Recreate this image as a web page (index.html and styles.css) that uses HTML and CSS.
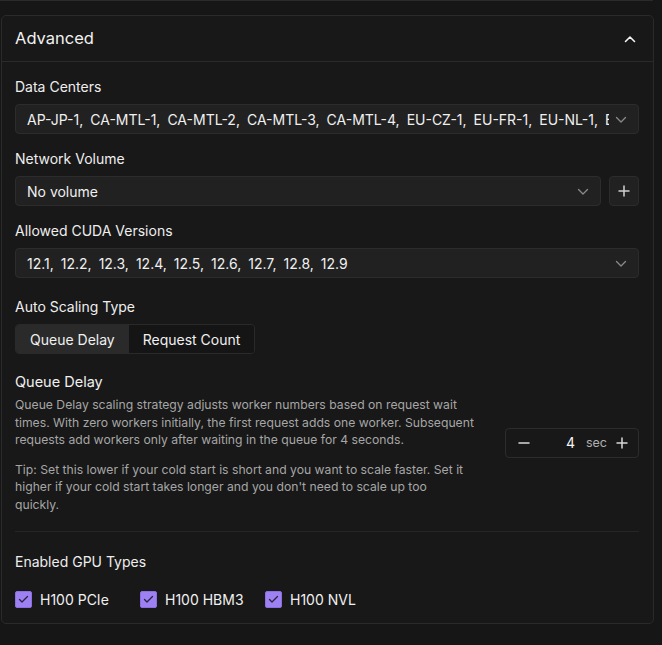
FILE: index.html
```html
<!DOCTYPE html>
<html>
<head>
<meta charset="utf-8">
<link rel="stylesheet" href="styles.css">
</head>
<body>
<div class="prev"></div>
<section class="card">
  <header class="card-head">
    <span class="card-title">Advanced</span>
    <svg class="chev-up" width="12" height="8" viewBox="0 0 12 8"><path d="M1.5 6.5 L6 2 L10.5 6.5" fill="none" stroke="#f2f2f2" stroke-width="1.6" stroke-linecap="round" stroke-linejoin="round"/></svg>
  </header>
  <div class="card-body">
    <div class="field">
      <div class="label">Data Centers</div>
      <div class="select">
        <div class="values"><span>AP-JP-1,</span><span>CA-MTL-1,</span><span>CA-MTL-2,</span><span>CA-MTL-3,</span><span>CA-MTL-4,</span><span>EU-CZ-1,</span><span>EU-FR-1,</span><span>EU-NL-1,</span><span>EU-RO-1,</span><span>EU-SE-1,</span></div>
        <svg class="chev" width="12" height="8" viewBox="0 0 12 8"><path d="M1.5 1.5 L6 6 L10.5 1.5" fill="none" stroke="#8a8a8a" stroke-width="1.3" stroke-linecap="round" stroke-linejoin="round"/></svg>
      </div>
    </div>
    <div class="field">
      <div class="label">Network Volume</div>
      <div class="row">
        <div class="select grow">
          <div class="values"><span>No volume</span></div>
          <svg class="chev" width="12" height="8" viewBox="0 0 12 8"><path d="M1.5 1.5 L6 6 L10.5 1.5" fill="none" stroke="#8a8a8a" stroke-width="1.3" stroke-linecap="round" stroke-linejoin="round"/></svg>
        </div>
        <div class="icon-btn"><svg width="12" height="12" viewBox="0 0 12 12"><path d="M6 1 V11 M1 6 H11" stroke="#cfcfcf" stroke-width="1.5" stroke-linecap="round"/></svg></div>
      </div>
    </div>
    <div class="field">
      <div class="label">Allowed CUDA Versions</div>
      <div class="select">
        <div class="values"><span>12.1,</span><span>12.2,</span><span>12.3,</span><span>12.4,</span><span>12.5,</span><span>12.6,</span><span>12.7,</span><span>12.8,</span><span>12.9</span></div>
        <svg class="chev" width="12" height="8" viewBox="0 0 12 8"><path d="M1.5 1.5 L6 6 L10.5 1.5" fill="none" stroke="#8a8a8a" stroke-width="1.3" stroke-linecap="round" stroke-linejoin="round"/></svg>
      </div>
    </div>
    <div class="field field-scaling">
      <div class="label">Auto Scaling Type</div>
      <div class="segmented">
        <div class="seg active">Queue Delay</div>
        <div class="seg">Request Count</div>
      </div>
    </div>
    <div class="delay">
      <div class="delay-text">
        <div class="delay-title">Queue Delay</div>
        <p class="desc">Queue Delay scaling strategy adjusts worker numbers based on request wait times. With zero workers initially, the first request adds one worker. Subsequent requests add workers only after waiting in the queue for 4 seconds.</p>
        <p class="desc">Tip: Set this lower if your cold start is short and you want to scale faster. Set it higher if your cold start takes longer and you don't need to scale up too<br>quickly.</p>
      </div>
      <div class="stepper">
        <svg width="12" height="12" viewBox="0 0 12 12"><path d="M1 6 H11" stroke="#d8d8d8" stroke-width="1.5" stroke-linecap="round"/></svg>
        <span class="num">4</span>
        <span class="unit">sec</span>
        <svg width="12" height="12" viewBox="0 0 12 12"><path d="M6 1 V11 M1 6 H11" stroke="#d8d8d8" stroke-width="1.5" stroke-linecap="round"/></svg>
      </div>
    </div>
    <div class="divider"></div>
    <div class="label gpu-label">Enabled GPU Types</div>
    <div class="checks">
      <label class="check"><span class="box"><svg width="11" height="9" viewBox="0 0 11 9"><path d="M1.5 4.5 L4 7 L9.5 1.5" fill="none" stroke="#2a2340" stroke-width="1.3" stroke-linecap="round" stroke-linejoin="round"/></svg></span>H100 PCIe</label>
      <label class="check"><span class="box"><svg width="11" height="9" viewBox="0 0 11 9"><path d="M1.5 4.5 L4 7 L9.5 1.5" fill="none" stroke="#2a2340" stroke-width="1.3" stroke-linecap="round" stroke-linejoin="round"/></svg></span>H100 HBM3</label>
      <label class="check"><span class="box"><svg width="11" height="9" viewBox="0 0 11 9"><path d="M1.5 4.5 L4 7 L9.5 1.5" fill="none" stroke="#2a2340" stroke-width="1.3" stroke-linecap="round" stroke-linejoin="round"/></svg></span>H100 NVL</label>
    </div>
  </div>
</section>
</body>
</html>
```

FILE: styles.css
```css
* { box-sizing: border-box; }
html, body { margin: 0; padding: 0; }
body {
  background: #161616;
  font-family: Inter, "Noto Sans", sans-serif;
  color: #ececec;
  width: 662px;
  height: 645px;
  overflow: hidden;
}
.prev {
  width: 653px;
  height: 1px;
  background: #2a2a2a;
}
.card {
  margin: 14px 0 0 1px;
  width: 653px;
  background: #181818;
  border: 1px solid #2a2a2a;
  border-radius: 5px;
}
.card-head {
  height: 46px;
  display: flex;
  align-items: center;
  justify-content: space-between;
  padding: 0 17px 0 13px;
  border-bottom: 1px solid #2a2a2a;
}
.card-title {
  font-size: 16.5px;
  color: #f2f2f2;
  margin-top: -2px;
}
.chev-up { margin-top: 0; }
.card-body {
  padding: 15px 14px 15px 13px;
}
.field { margin-bottom: 15px; }
.field-scaling { margin-top: 19px; margin-bottom: 18px; }
.label {
  font-size: 14px;
  line-height: 20px;
  color: #eeeeee;
  margin-bottom: 7px;
}
.select {
  height: 30px;
  background: #212121;
  border: 1px solid #2c2c2c;
  border-radius: 4px;
  display: flex;
  align-items: center;
  padding: 0 11px 0 11px;
  font-size: 14px;
  color: #f0f0f0;
}
.values {
  flex: 1;
  display: flex;
  white-space: nowrap;
  overflow: hidden;
  gap: 7px;
  margin-right: 6px;
}
.chev { flex: none; margin-top: 1px; }
.row { display: flex; gap: 8px; }
.grow { flex: 1; }
.icon-btn {
  width: 30px;
  height: 30px;
  flex: none;
  background: #212121;
  border: 1px solid #2c2c2c;
  border-radius: 4px;
  display: flex;
  align-items: center;
  justify-content: center;
}
.segmented {
  display: inline-flex;
  height: 30px;
  border: 1px solid #2a2a2a;
  border-radius: 4px;
  overflow: hidden;
  font-size: 14px;
}
.seg {
  display: flex;
  align-items: center;
  padding: 0 14px;
  color: #f0f0f0;
  background: #151515;
}
.seg.active { background: #2a2a2a; }
.delay {
  display: flex;
  align-items: center;
  justify-content: space-between;
}
.delay-text { width: 464px; }
.delay-title {
  font-size: 14.5px;
  line-height: 20px;
  color: #f0f0f0;
  margin-bottom: 4px;
}
.desc {
  margin: 0 0 12px 0;
  font-size: 12.2px;
  line-height: 17.5px;
  color: #a6a6a6;
}
.desc:last-child { margin-bottom: 0; }
.stepper {
  width: 134px;
  height: 30px;
  border: 1px solid #2c2c2c;
  border-radius: 4px;
  display: flex;
  align-items: center;
  padding: 0 10px 0 12px;
}
.stepper .num {
  flex: 1;
  text-align: right;
  font-size: 14px;
  color: #f4f4f4;
  margin-right: 11px;
}
.stepper .unit {
  font-size: 12.5px;
  color: #b0b0b0;
  margin-right: 9px;
}
.divider {
  height: 1px;
  background: #262626;
  margin: 18px 0 20px;
}
.gpu-label { margin-bottom: 19px; }
.checks { display: grid; grid-template-columns: repeat(3, 125px); }
.check {
  display: flex;
  align-items: center;
  gap: 8px;
  font-size: 14px;
  color: #f0f0f0;
}
.box {
  width: 17px;
  height: 17px;
  background: #9d80f2;
  border: 1px solid #8b6fe0;
  border-radius: 2px;
  display: flex;
  align-items: center;
  justify-content: center;
}
```
